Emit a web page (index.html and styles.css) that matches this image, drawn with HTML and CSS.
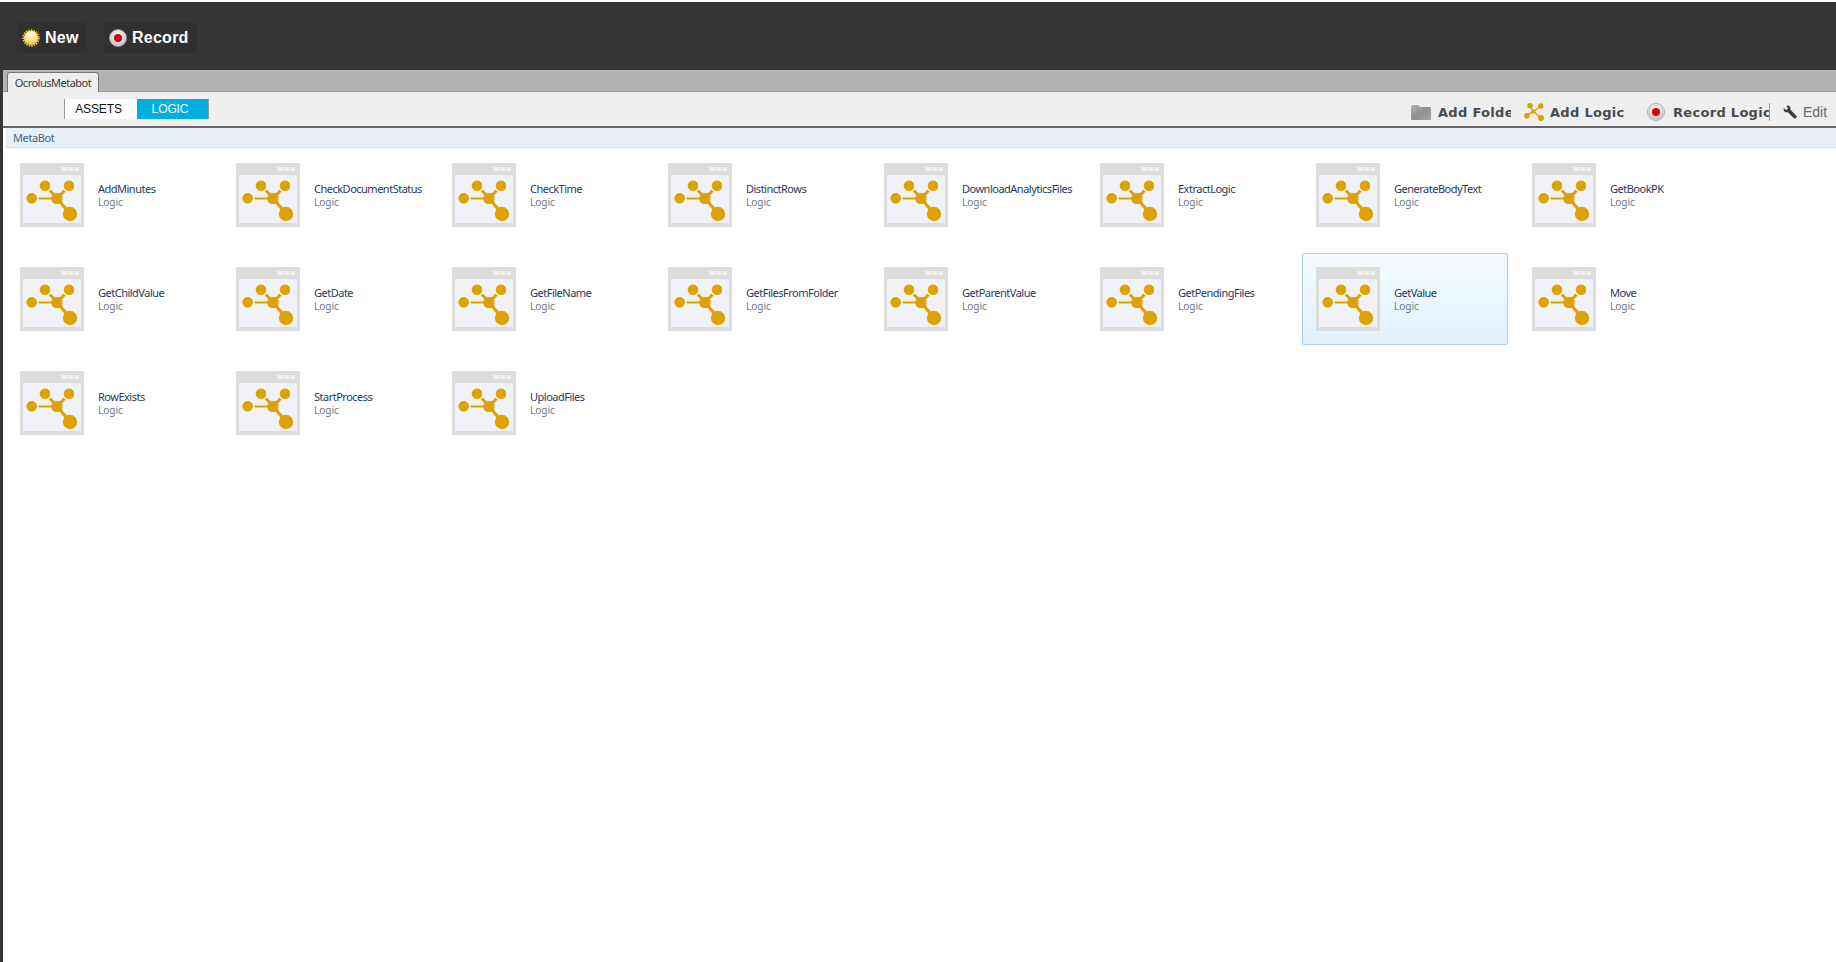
FILE: index.html
```html
<!DOCTYPE html>
<html lang="en">
<head>
<meta charset="utf-8">
<title>OcrolusMetabot</title>
<link rel="stylesheet" href="styles.css">
</head>
<body>
<svg class="defs" width="0" height="0" aria-hidden="true">
  <defs>
    <symbol id="logic" viewBox="0 0 64 64">
      <rect width="64" height="64" fill="#dcdcdc"/>
      <rect x="3" y="12" width="58" height="48" fill="#f1f2f7"/>
      <rect x="42" y="4" width="5" height="4" fill="#f1f1f1"/>
      <rect x="48" y="4" width="5" height="4" fill="#f1f1f1"/>
      <rect x="54" y="4" width="5" height="4" fill="#f1f1f1"/>
      <g stroke="#dca300" fill="none">
        <path d="M18.500 35.500H37" stroke-width="2"/>
        <path d="M30 27.500L37 35.500L44.500 27.500M37 35.500L46 46" stroke-width="3"/>
      </g>
      <g fill="#dca300">
        <circle cx="11.700" cy="35.300" r="5.300"/>
        <circle cx="25" cy="22.700" r="5.300"/>
        <circle cx="49" cy="22.700" r="5.300"/>
        <rect x="31.500" y="30" width="11" height="11" rx="4.500"/>
        <circle cx="50" cy="51" r="7.200"/>
      </g>
    </symbol>
    <radialGradient id="recordFace" cx="50%" cy="35%" r="70%">
      <stop offset="0" stop-color="#ffffff"/>
      <stop offset="1" stop-color="#bdbdbd"/>
    </radialGradient>
    <radialGradient id="sunFace" cx="50%" cy="30%" r="70%">
      <stop offset="0" stop-color="#fffbd6"/>
      <stop offset=".6" stop-color="#fde08a"/>
      <stop offset="1" stop-color="#f5ae22"/>
    </radialGradient>
    <linearGradient id="folderFace" x1="0" y1="0" x2="1" y2="1">
      <stop offset="0" stop-color="#b4b4b4"/>
      <stop offset=".5" stop-color="#8f8f8f"/>
      <stop offset="1" stop-color="#a5a5a5"/>
    </linearGradient>
    <symbol id="record" viewBox="0 0 18 18">
      <circle cx="9" cy="9" r="8.600" fill="url(#recordFace)" stroke="#9a9a9a" stroke-width=".6"/>
      <circle cx="9" cy="9" r="4" fill="#d80012"/>
    </symbol>
  </defs>
</svg>

<header class="topbar">
  <button class="top-btn top-btn-new">
    <svg class="top-icon" viewBox="0 0 18 18" aria-hidden="true">
      <circle cx="9" cy="9" r="7.800" fill="none" stroke="#f6c23c" stroke-width="1.800" stroke-dasharray="1.500 1.100"/>
      <circle cx="9" cy="9" r="7.200" fill="url(#sunFace)"/>
    </svg>
    <span>New</span>
  </button>
  <button class="top-btn top-btn-record">
    <svg class="top-icon" aria-hidden="true"><use href="#record"/></svg>
    <span>Record</span>
  </button>
</header>

<main class="workspace">
  <nav class="tabstrip">
    <div class="tab">OcrolusMetabot</div>
  </nav>

  <section class="toolbar">
    <div class="toggle">
      <span class="toggle-item toggle-assets">ASSETS</span>
      <span class="toggle-item toggle-logic">LOGIC</span>
    </div>
    <div class="actions">
      <div class="action action-folder">
        <svg class="action-icon-folder" viewBox="0 0 20 16" aria-hidden="true">
          <path d="M0 2.500Q0 1 1.500 1H7L9 3H18.500Q20 3 20 4.500V14.500Q20 16 18.500 16H1.500Q0 16 0 14.500Z" fill="url(#folderFace)"/>
        </svg>
        <span class="action-label">Add Folder</span>
      </div>
      <div class="action action-logic">
        <svg class="action-icon-logic" viewBox="0 0 20 18" aria-hidden="true">
          <path d="M6 3L9.500 8.500L16.700 3M9.500 8.500L17 15M2.800 12.500L9.500 8.500" stroke="#dca300" stroke-width="1.500" fill="none"/>
          <g fill="#dca300">
            <circle cx="6" cy="2.800" r="2.700"/><circle cx="16.800" cy="3" r="2.700"/>
            <circle cx="2.800" cy="12.700" r="2.800"/><circle cx="17" cy="15" r="3"/>
            <circle cx="9.500" cy="8.500" r="2"/>
          </g>
        </svg>
        <span class="action-label">Add Logic</span>
      </div>
      <div class="action action-record">
        <svg class="action-icon-record" aria-hidden="true"><use href="#record"/></svg>
        <span class="action-label">Record Logic</span>
      </div>
      <div class="action action-edit">
        <svg class="action-icon-wrench" viewBox="0 0 16 16" aria-hidden="true">
          <path d="M1 3.500L3.500 6L6 3.500L3.500 1Q6.500 -.3 8 2Q9 3.500 8.300 5L15.500 12.500Q16 13.500 15 14.800Q13.800 16 12.800 15.300L5.300 8Q3.500 8.700 2 7.700Q.3 6.300 1 3.500Z" fill="#3c3c3c"/>
        </svg>
        <span class="edit-label">Edit</span>
      </div>
    </div>
  </section>

  <div class="breadcrumb">MetaBot</div>

  <section class="grid">
    <div class="item"><svg class="item-icon"><use href="#logic"/></svg><div class="item-text"><div class="item-name">AddMinutes</div><div class="item-type">Logic</div></div></div>
    <div class="item"><svg class="item-icon"><use href="#logic"/></svg><div class="item-text"><div class="item-name">CheckDocumentStatus</div><div class="item-type">Logic</div></div></div>
    <div class="item"><svg class="item-icon"><use href="#logic"/></svg><div class="item-text"><div class="item-name">CheckTime</div><div class="item-type">Logic</div></div></div>
    <div class="item"><svg class="item-icon"><use href="#logic"/></svg><div class="item-text"><div class="item-name">DistinctRows</div><div class="item-type">Logic</div></div></div>
    <div class="item"><svg class="item-icon"><use href="#logic"/></svg><div class="item-text"><div class="item-name">DownloadAnalyticsFiles</div><div class="item-type">Logic</div></div></div>
    <div class="item"><svg class="item-icon"><use href="#logic"/></svg><div class="item-text"><div class="item-name">ExtractLogic</div><div class="item-type">Logic</div></div></div>
    <div class="item"><svg class="item-icon"><use href="#logic"/></svg><div class="item-text"><div class="item-name">GenerateBodyText</div><div class="item-type">Logic</div></div></div>
    <div class="item"><svg class="item-icon"><use href="#logic"/></svg><div class="item-text"><div class="item-name">GetBookPK</div><div class="item-type">Logic</div></div></div>
    <div class="item"><svg class="item-icon"><use href="#logic"/></svg><div class="item-text"><div class="item-name">GetChildValue</div><div class="item-type">Logic</div></div></div>
    <div class="item"><svg class="item-icon"><use href="#logic"/></svg><div class="item-text"><div class="item-name">GetDate</div><div class="item-type">Logic</div></div></div>
    <div class="item"><svg class="item-icon"><use href="#logic"/></svg><div class="item-text"><div class="item-name">GetFileName</div><div class="item-type">Logic</div></div></div>
    <div class="item"><svg class="item-icon"><use href="#logic"/></svg><div class="item-text"><div class="item-name">GetFilesFromFolder</div><div class="item-type">Logic</div></div></div>
    <div class="item"><svg class="item-icon"><use href="#logic"/></svg><div class="item-text"><div class="item-name">GetParentValue</div><div class="item-type">Logic</div></div></div>
    <div class="item"><svg class="item-icon"><use href="#logic"/></svg><div class="item-text"><div class="item-name">GetPendingFiles</div><div class="item-type">Logic</div></div></div>
    <div class="item item-selected"><svg class="item-icon"><use href="#logic"/></svg><div class="item-text"><div class="item-name">GetValue</div><div class="item-type">Logic</div></div></div>
    <div class="item"><svg class="item-icon"><use href="#logic"/></svg><div class="item-text"><div class="item-name">Move</div><div class="item-type">Logic</div></div></div>
    <div class="item"><svg class="item-icon"><use href="#logic"/></svg><div class="item-text"><div class="item-name">RowExists</div><div class="item-type">Logic</div></div></div>
    <div class="item"><svg class="item-icon"><use href="#logic"/></svg><div class="item-text"><div class="item-name">StartProcess</div><div class="item-type">Logic</div></div></div>
    <div class="item"><svg class="item-icon"><use href="#logic"/></svg><div class="item-text"><div class="item-name">UploadFiles</div><div class="item-type">Logic</div></div></div>
  </section>
</main>
</body>
</html>
```
FILE: styles.css
```css
* { box-sizing: border-box; }
html, body { height: 100%; }
body {
  margin: 0;
  overflow: hidden;
  background: #fff;
  font-family: "Noto Sans", "Liberation Sans", sans-serif;
  display: flex;
  flex-direction: column;
  border-top: 2px solid #fff;
}
.defs { position: absolute; }
.topbar {
  flex: none;
  height: 68px;
  background: #363636;
  display: flex;
  align-items: center;
  gap: 17px;
  padding: 4px 0 0 17px;
}
.top-btn {
  height: 30px;
  border: 0;
  padding: 0;
  background: #303030;
  color: #fff;
  font: bold 16px "Liberation Sans", sans-serif;
  letter-spacing: .25px;
  display: flex;
  align-items: center;
  gap: 5px;
}
.top-btn-new { width: 70px; padding-left: 5px; }
.top-btn-record { width: 93px; padding-left: 5px; }
.top-icon { width: 18px; height: 18px; flex: none; }
.workspace {
  flex: 1;
  min-height: 0;
  border-left: 3px solid #363636;
  display: flex;
  flex-direction: column;
}
.tabstrip {
  flex: none;
  height: 22px;
  background: #b3b3b3;
  padding: 2px 0 0 4px;
  display: flex;
  border-bottom: 1px solid #999;
}
.tab {
  width: 92px;
  height: 20px;
  background: #eeeeee;
  border: 1px solid #777;
  border-bottom: 0;
  border-radius: 3px 3px 0 0;
  color: #3a3a3a;
  font-size: 11px;
  letter-spacing: -.5px;
  line-height: 19px;
  text-align: center;
}
.toolbar {
  flex: none;
  height: 36px;
  background: #efefef;
  border-bottom: 2px solid #666;
  display: flex;
  align-items: flex-start;
  justify-content: space-between;
  padding: 7px 0 0 61px;
}
.toggle {
  display: flex;
  width: 145px;
  height: 20px;
  border-left: 1px solid #999;
  border-right: 1px solid #999;
  font: 12px/20px "Liberation Sans", sans-serif;
}
.toggle-item { text-align: center; padding-right: 5px; letter-spacing: -.1px; }
.toggle-assets { width: 72px; background: #fff; color: #111; }
.toggle-logic { flex: 1; background: #00aee0; color: #fff; }
.actions {
  display: flex;
  align-items: center;
  height: 24px;
  margin-top: 1px;
  font: bold 13px "DejaVu Sans", sans-serif;
  color: #4a4a52;
}
.action { display: flex; align-items: center; flex: none; overflow: hidden; }
.action-folder { width: 100px; gap: 7px; }
.action-logic { width: 123px; gap: 6px; margin-left: 13px; }
.action-record { width: 123px; gap: 8px; border-right: 1px solid #a0a0a0; height: 18px; }
.action-edit { width: 66px; gap: 6px; padding-left: 13px; }
.action-icon-folder { width: 20px; height: 16px; flex: none; }
.action-icon-logic { width: 20px; height: 18px; flex: none; }
.action-icon-record { width: 18px; height: 18px; flex: none; }
.action-icon-wrench { width: 14px; height: 14px; flex: none; }
.action-label { white-space: nowrap; letter-spacing: .3px; }
.edit-label { font: 14px "Liberation Sans", sans-serif; color: #666; }
.breadcrumb {
  flex: none;
  height: 20px;
  margin-left: 3px;
  background: #e8f0f8;
  border-bottom: 1px solid #d5dde6;
  padding-left: 7px;
  font-size: 11px;
  letter-spacing: -.4px;
  line-height: 19px;
  color: #47607c;
}
.grid {
  flex: 1;
  display: flex;
  flex-wrap: wrap;
  align-content: flex-start;
  gap: 12px 10px;
  padding: 1px 0 0 3px;
  width: 1740px;
}
.item {
  width: 206px;
  height: 92px;
  padding: 0 12px 0 13px;
  display: flex;
  align-items: center;
  gap: 14px;
  border: 1px solid transparent;
  border-radius: 2px;
}
.item-selected {
  border-color: #a9cdee;
  background: linear-gradient(#f5fbff, #e2f1fe);
}
.item-icon { width: 64px; height: 64px; flex: none; }
.item-name { font-size: 11px; letter-spacing: -.5px; line-height: 14px; color: #1f3a5f; white-space: nowrap; }
.item-type { font-size: 10px; line-height: 12px; color: #6f7680; }
```
